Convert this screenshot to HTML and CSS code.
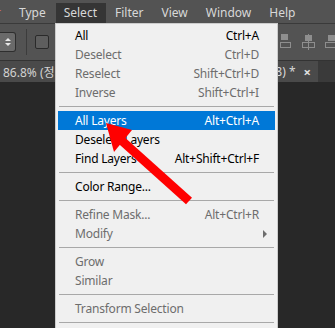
FILE: index.html
```html
<!DOCTYPE html>
<html lang="en">
<head>
  <meta charset="UTF-8" />
  <title>Select Menu</title>
  <link rel="stylesheet" href="styles.css">
</head>
<body>
  <div class="menubar">
    <span class="menu-title cut">r</span>
    <span class="menu-title">Type</span>
    <span class="menu-title open">Select</span>
    <span class="menu-title">Filter</span>
    <span class="menu-title">View</span>
    <span class="menu-title">Window</span>
    <span class="menu-title">Help</span>
  </div>

  <div class="options">
    <div class="spinner"><span class="up"></span><span class="down"></span></div>
    <div class="vsep"></div>
    <div class="check"></div>
    <div class="align-icons">
      <svg width="58" height="16" viewBox="0 0 58 16">
        <g fill="none" stroke="#8e8e8e" stroke-width="1">
          <rect x="1.5" y="0.5" width="6" height="5" fill="#8e8e8e"/>
          <rect x="0.5" y="8.5" width="10" height="5"/>
          <line x1="28.5" y1="0" x2="28.5" y2="16"/>
          <rect x="25.5" y="1.5" width="6" height="5" fill="#8e8e8e"/>
          <rect x="22.5" y="8.5" width="12" height="5"/>
          <rect x="48.5" y="1.5" width="6" height="5" fill="#8e8e8e"/>
          <rect x="45.5" y="8.5" width="12" height="5"/>
        </g>
      </svg>
    </div>
  </div>

  <div class="tabs">
    <div class="tab">
      <span class="tab-name">86.8% (정</span>
      <span class="tab-end">8) *</span>
      <span class="tab-close">×</span>
    </div>
  </div>

  <div class="canvas"></div>

  <div class="dropdown">
    <div class="item"><span>All</span><span class="key">Ctrl+A</span></div>
    <div class="item off"><span>Deselect</span><span class="key">Ctrl+D</span></div>
    <div class="item off"><span>Reselect</span><span class="key">Shift+Ctrl+D</span></div>
    <div class="item off"><span>Inverse</span><span class="key">Shift+Ctrl+I</span></div>
    <div class="sep"></div>
    <div class="item hot"><span>All Layers</span><span class="key">Alt+Ctrl+A</span></div>
    <div class="item"><span>Deselect Layers</span></div>
    <div class="item"><span>Find Layers</span><span class="key">Alt+Shift+Ctrl+F</span></div>
    <div class="sep"></div>
    <div class="item"><span>Color Range...</span></div>
    <div class="sep"></div>
    <div class="item off"><span>Refine Mask...</span><span class="key">Alt+Ctrl+R</span></div>
    <div class="item off"><span>Modify</span><span class="sub"></span></div>
    <div class="sep"></div>
    <div class="item off"><span>Grow</span></div>
    <div class="item off"><span>Similar</span></div>
    <div class="sep"></div>
    <div class="item off"><span>Transform Selection</span></div>
    <div class="sep"></div>
  </div>

  <svg class="pointer" width="335" height="328" viewBox="0 0 335 328">
    <line x1="121" y1="140" x2="189" y2="201" stroke="#ff0000" stroke-width="9"/>
    <polygon points="106,123 114,152 132,130" fill="#ff0000"/>
  </svg>
</body>
</html>
```

FILE: styles.css
```css
body {
  margin: 0;
  width: 335px;
  height: 328px;
  overflow: hidden;
  background: #282828;
  font-family: "Noto Sans", "Noto Sans CJK KR", sans-serif;
  font-size: 12px;
  position: relative;
}

.menubar {
  display: flex;
  height: 23px;
  background: #535353;
  color: #d8d8d8;
  white-space: nowrap;
}

.menu-title {
  padding: 0 9px;
  height: 20px;
  margin-top: 3px;
  line-height: 19px;
}

.menu-title.cut {
  margin-left: -13px;
  color: #c76a6a;
}

.menu-title.open {
  background: #353535;
  padding: 0 9px 0 8px;
  margin-left: 1px;
}

.options {
  display: flex;
  align-items: center;
  height: 36px;
  background: #535353;
  border-top: 1px solid #3a3a3a;
  border-bottom: 1px solid #333;
}

.spinner {
  width: 15px;
  height: 18px;
  background: #6a6a6a;
  border: 1px solid #2e2e2e;
  border-left: none;
  border-radius: 0 3px 3px 0;
  display: flex;
  flex-direction: column;
  align-items: center;
  justify-content: center;
  gap: 2px;
}

.spinner .up,
.spinner .down {
  width: 0;
  height: 0;
  border-left: 3px solid transparent;
  border-right: 3px solid transparent;
}

.spinner .up { border-bottom: 3px solid #e8e8e8; }
.spinner .down { border-top: 3px solid #e8e8e8; }

.vsep {
  width: 1px;
  height: 26px;
  background: #3c3c3c;
  margin-left: 10px;
}

.check {
  width: 12px;
  height: 12px;
  margin-left: 8px;
  background: #5e5e5e;
  border: 1px solid #2a2a2a;
  border-radius: 2px;
}

.align-icons {
  margin-left: auto;
  margin-right: -2px;
  display: flex;
}

.align-icons svg {
  display: block;
  margin-right: -1px;
}

.tabs {
  height: 21px;
  background: #3a3a3a;
  display: flex;
}

.tab {
  width: 318px;
  background: #4a4a4a;
  color: #d2d2d2;
  display: flex;
  align-items: center;
  padding-left: 3px;
  box-sizing: border-box;
}

.tab-name { flex: 1; }

.tab-end {
  color: #d8d8d8;
  margin-right: 8px;
}

.tab-close {
  font-weight: bold;
  color: #e0e0e0;
  margin-right: 7px;
  font-size: 13px;
}

.canvas {
  height: 250px;
  background: #282828;
}

.dropdown {
  position: absolute;
  left: 55px;
  top: 23px;
  width: 223px;
  height: 310px;
  box-sizing: border-box;
  background: #f0f0f0;
  border: 1px solid #cccccc;
  padding: 2px 2px 0;
  letter-spacing: -0.2px;
}

.item {
  display: flex;
  align-items: center;
  justify-content: space-between;
  height: 19px;
  padding: 0 16px 0 17px;
  color: #000;
}

.item.off { color: #6d6d6d; }

.item.hot {
  background: #0078d7;
  color: #fff;
}

.item .sub {
  width: 0;
  height: 0;
  border-top: 4px solid transparent;
  border-bottom: 4px solid transparent;
  border-left: 4px solid #6d6d6d;
  margin-right: -8px;
}

.sep {
  height: 9px;
  margin: 0 1px;
  display: flex;
  align-items: center;
}

.sep::after {
  content: "";
  display: block;
  width: 100%;
  height: 1px;
  background: #a8a8a8;
}

.pointer {
  position: absolute;
  left: 0;
  top: 0;
}
```
